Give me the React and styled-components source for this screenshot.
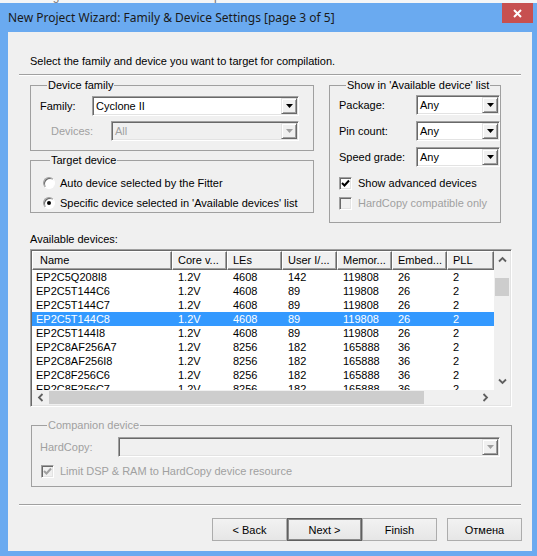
import styled, { createGlobalStyle } from "styled-components";

const GlobalStyle = createGlobalStyle`
  body {
    margin: 0;
    background: #ffffff;
    font-family: "Liberation Sans", Arial, sans-serif;
  }
`;

const Page = styled.div`
  width: 537px;
  height: 556px;
  overflow: hidden;
  display: flex;
  flex-direction: column;
`;

const MenuStrip = styled.div`
  height: 3px;
  overflow: hidden;
  background: #f5f6f7;
  font-size: 12px;
  line-height: 14px;
  color: #777;
  white-space: nowrap;
  & > div {
    margin-top: -11px;
    display: flex;
    gap: 22px;
  }
`;

const Frame = styled.div`
  flex: 1;
  display: flex;
  flex-direction: column;
  background: #6aaaf0;
  padding: 0 5px 5px 8px;
`;

const TitleBar = styled.div`
  height: 29px;
  display: flex;
  justify-content: space-between;
  align-items: flex-start;
`;

const Title = styled.span`
  font-family: "Noto Sans", "Open Sans", sans-serif;
  font-size: 12px;
  line-height: 16px;
  color: #1a1a1a;
  margin-top: 7px;
  white-space: nowrap;
`;

const CloseBtn = styled.div`
  width: 31px;
  height: 20px;
  margin-right: -1px;
  background: #c75050;
  display: flex;
  align-items: center;
  justify-content: center;
`;

const Client = styled.div`
  flex: 1;
  background: #f0f0f0;
  display: flex;
  flex-direction: column;
  font-size: 11px;
  color: #000;
`;

const Intro = styled.div`
  margin: 23px 0 0 22px;
  line-height: 13px;
`;

const Separator = styled.div`
  margin: ${p => p.top}px 11px 0 11px;
  border-top: 1px solid #a0a0a0;
  border-bottom: 1px solid #ffffff;
`;

const Columns = styled.div`
  display: flex;
  gap: 15px;
  margin: 3px 0 0 22px;
`;

const Stack = styled.div`
  display: flex;
  flex-direction: column;
  gap: 3px;
`;

const Group = styled.fieldset`
  margin: 0;
  margin-left: ${p => p.left || 0}px;
  padding: ${p => p.pad || "0 0 0 9px"};
  box-sizing: border-box;
  width: ${p => p.w}px;
  height: ${p => p.h}px;
  border: 1px solid #a0a0a0;
  min-inline-size: 0;
  display: flex;
  flex-direction: column;
`;

const Legend = styled.legend`
  margin-left: 7px;
  padding: 0 1px;
  line-height: 13px;
  color: ${p => (p.disabled ? "#a0a0a0" : "#000")};
`;

const Row = styled.div`
  display: flex;
  align-items: center;
  height: 20px;
  margin-top: ${p => p.top || 0}px;
  padding-left: ${p => p.indent || 0}px;
`;

const Label = styled.span`
  width: ${p => p.w}px;
  flex-shrink: 0;
  color: ${p => (p.disabled ? "#a0a0a0" : "#000")};
`;

const ComboBox = styled.div`
  box-sizing: border-box;
  width: ${p => p.w}px;
  height: 20px;
  display: flex;
  border: 1px solid;
  border-color: #a0a0a0 #ffffff #ffffff #a0a0a0;
  box-shadow: inset 1px 1px 0 #696969, inset -1px -1px 0 #e3e3e3;
  background: ${p => (p.disabled ? "#f0f0f0" : "#ffffff")};
  padding: 1px;
`;

const ComboText = styled.span`
  flex: 1;
  padding-left: 2px;
  line-height: 16px;
  color: ${p => (p.disabled ? "#a0a0a0" : "#000")};
`;

const DropButton = styled.span`
  box-sizing: border-box;
  width: 16px;
  height: 16px;
  background: #f0f0f0;
  border: 1px solid;
  border-color: #e3e3e3 #696969 #696969 #e3e3e3;
  box-shadow: inset 1px 1px 0 #ffffff, inset -1px -1px 0 #a0a0a0;
  display: flex;
  align-items: center;
  justify-content: center;
`;

const Choice = styled.label`
  display: flex;
  align-items: center;
  height: 20px;
  gap: ${p => p.gap || 5}px;
  color: ${p => (p.disabled ? "#a0a0a0" : "#000")};
`;

const RadioDot = styled.span`
  box-sizing: border-box;
  width: 12px;
  height: 12px;
  border-radius: 50%;
  border: 1px solid;
  border-color: #a0a0a0 #ffffff #ffffff #a0a0a0;
  box-shadow: inset 1px 1px 0 #696969;
  background: #ffffff;
  display: flex;
  align-items: center;
  justify-content: center;
  &::after {
    content: "";
    width: 4px;
    height: 4px;
    border-radius: 50%;
    background: ${p => (p.checked ? "#000" : "transparent")};
  }
`;

const CheckBox = styled.span`
  box-sizing: border-box;
  width: 13px;
  height: 13px;
  border: 1px solid;
  border-color: #a0a0a0 #ffffff #ffffff #a0a0a0;
  box-shadow: inset 1px 1px 0 #696969, inset -1px -1px 0 #e3e3e3;
  background: ${p => (p.disabled ? "#f0f0f0" : "#ffffff")};
  display: flex;
  align-items: center;
  justify-content: center;
`;

const Caption = styled.div`
  margin: 10px 0 0 22px;
  line-height: 13px;
`;

const ListBox = styled.div`
  margin: 3px 0 0 22px;
  width: 482px;
  height: 158px;
  box-sizing: border-box;
  border: 1px solid;
  border-color: #a0a0a0 #ffffff #ffffff #a0a0a0;
  box-shadow: inset 1px 1px 0 #696969, inset -1px -1px 0 #e3e3e3;
  padding: 1px;
  display: grid;
  grid-template-columns: 462px 16px;
  grid-template-rows: 139px 15px;
  background: #ffffff;
`;

const ListMain = styled.div`
  overflow: hidden;
  display: flex;
  flex-direction: column;
`;

const cols = "140px 55px 55px 55px 55px 55px 47px";

const HeaderRow = styled.div`
  display: grid;
  grid-template-columns: ${cols};
  height: 19px;
  flex-shrink: 0;
`;

const HeaderCell = styled.div`
  box-sizing: border-box;
  background: #f0f0f0;
  border: 1px solid;
  border-color: #ffffff #696969 #696969 #ffffff;
  box-shadow: inset -1px -1px 0 #a0a0a0;
  padding-left: ${p => p.pad}px;
  line-height: 16px;
  white-space: nowrap;
  overflow: hidden;
`;

const Body = styled.div`
  height: 120px;
  overflow: hidden;
`;

const DataRow = styled.div`
  display: grid;
  grid-template-columns: ${cols};
  height: 14px;
  line-height: 14px;
  background: ${p => (p.selected ? "#3399ff" : "transparent")};
  color: ${p => (p.selected ? "#ffffff" : "#000")};
`;

const Cell = styled.span`
  padding-left: ${p => p.pad}px;
  white-space: nowrap;
  overflow: hidden;
`;

const VScroll = styled.div`
  background: #f0f0f0;
  display: flex;
  flex-direction: column;
`;

const HScroll = styled.div`
  background: #f0f0f0;
  display: flex;
`;

const ArrowBtn = styled.div`
  width: ${p => (p.horizontal ? "17px" : "100%")};
  height: ${p => (p.horizontal ? "100%" : "17px")};
  flex-shrink: 0;
  display: flex;
  align-items: center;
  justify-content: center;
`;

const Track = styled.div`
  flex: 1;
  display: flex;
  flex-direction: ${p => (p.horizontal ? "row" : "column")};
`;

const Thumb = styled.div`
  background: #cdcdcd;
  margin: ${p => p.margin};
  width: ${p => p.w};
  height: ${p => p.h};
`;

const Corner = styled.div`
  background: #f0f0f0;
`;

const ButtonBar = styled.div`
  display: flex;
  justify-content: flex-end;
  margin: 12px 10px 0 0;
`;

const Button = styled.button`
  box-sizing: border-box;
  width: 75px;
  height: 23px;
  margin-left: ${p => p.gap || 0}px;
  font-family: "Liberation Sans", Arial, sans-serif;
  font-size: 11px;
  color: #000;
  background: linear-gradient(#f2f2f2, #e6e6e6);
  border: 1px solid ${p => (p.primary ? "#5f5f5f" : "#acacac")};
  box-shadow: ${p => (p.primary ? "inset 0 0 0 1px #8a8a8a" : "none")};
  padding: 0;
`;

const Arrow = ({ color = "#000" }) => (
  <svg width="7" height="4" viewBox="0 0 7 4">
    <path d="M0 0 H7 L3.5 4 Z" fill={color} />
  </svg>
);

const Combo = ({ w, value, disabled }) => (
  <ComboBox w={w} disabled={disabled}>
    <ComboText disabled={disabled}>{value}</ComboText>
    <DropButton>
      <Arrow color={disabled ? "#a0a0a0" : "#000"} />
    </DropButton>
  </ComboBox>
);

const Check = ({ color }) => (
  <svg width="9" height="9" viewBox="0 0 9 9">
    <path d="M1 4 L3.5 6.5 L8 1.5" stroke={color} strokeWidth="2" fill="none" />
  </svg>
);

const Chevron = ({ dir }) => {
  const rot = { up: 0, right: 90, down: 180, left: 270 }[dir];
  return (
    <svg width="9" height="9" viewBox="0 0 9 9" style={{ transform: `rotate(${rot}deg)` }}>
      <path d="M1 6.5 L4.5 3 L8 6.5" stroke="#606060" strokeWidth="1.8" fill="none" />
    </svg>
  );
};

const headers = [
  ["Name", 7],
  ["Core v...", 5],
  ["LEs", 5],
  ["User I/...", 5],
  ["Memor...", 5],
  ["Embed...", 5],
  ["PLL", 5],
];

const devices = [
  ["EP2C5Q208I8", "1.2V", "4608", "142", "119808", "26", "2"],
  ["EP2C5T144C6", "1.2V", "4608", "89", "119808", "26", "2"],
  ["EP2C5T144C7", "1.2V", "4608", "89", "119808", "26", "2"],
  ["EP2C5T144C8", "1.2V", "4608", "89", "119808", "26", "2"],
  ["EP2C5T144I8", "1.2V", "4608", "89", "119808", "26", "2"],
  ["EP2C8AF256A7", "1.2V", "8256", "182", "165888", "36", "2"],
  ["EP2C8AF256I8", "1.2V", "8256", "182", "165888", "36", "2"],
  ["EP2C8F256C6", "1.2V", "8256", "182", "165888", "36", "2"],
  ["EP2C8F256C7", "1.2V", "8256", "182", "165888", "36", "2"],
];

export default function App() {
  return (
    <Page>
      <GlobalStyle />
      <MenuStrip>
        <div>
          <span>Processing</span>
          <span>Tools</span>
          <span>Window</span>
          <span>Help</span>
        </div>
      </MenuStrip>
      <Frame>
        <TitleBar>
          <Title>New Project Wizard: Family &amp; Device Settings [page 3 of 5]</Title>
          <CloseBtn>
            <svg width="9" height="9" viewBox="0 0 9 9">
              <path d="M1 1 L8 8 M8 1 L1 8" stroke="#fff" strokeWidth="2" />
            </svg>
          </CloseBtn>
        </TitleBar>
        <Client>
          <Intro>Select the family and device you want to target for compilation.</Intro>
          <Separator top={6} />
          <Columns>
            <Stack>
              <Group w={284} h={72}>
                <Legend>Device family</Legend>
                <Row top={4}>
                  <Label w={52}>Family:</Label>
                  <Combo w={207} value="Cyclone II" />
                </Row>
                <Row top={5} indent={11}>
                  <Label w={60} disabled>Devices:</Label>
                  <Combo w={188} value="All" disabled />
                </Row>
              </Group>
              <Group w={284} h={59} pad="0 0 0 12px">
                <Legend>Target device</Legend>
                <Choice style={{ marginTop: 6 }}>
                  <RadioDot />
                  Auto device selected by the Fitter
                </Choice>
                <Choice>
                  <RadioDot checked />
                  Specific device selected in 'Available devices' list
                </Choice>
              </Group>
            </Stack>
            <Group w={172} h={144}>
              <Legend>Show in 'Available device' list</Legend>
              <Row top={3}>
                <Label w={77}>Package:</Label>
                <Combo w={84} value="Any" />
              </Row>
              <Row top={6}>
                <Label w={77}>Pin count:</Label>
                <Combo w={84} value="Any" />
              </Row>
              <Row top={6}>
                <Label w={77}>Speed grade:</Label>
                <Combo w={84} value="Any" />
              </Row>
              <Choice style={{ marginTop: 6 }} gap={6}>
                <CheckBox>
                  <Check color="#000" />
                </CheckBox>
                Show advanced devices
              </Choice>
              <Choice disabled gap={6}>
                <CheckBox disabled />
                HardCopy compatible only
              </Choice>
            </Group>
          </Columns>
          <Caption>Available devices:</Caption>
          <ListBox>
            <ListMain>
              <HeaderRow>
                {headers.map(([h, pad]) => (
                  <HeaderCell key={h} pad={pad}>{h}</HeaderCell>
                ))}
              </HeaderRow>
              <Body>
                {devices.map((d, i) => (
                  <DataRow key={d[0]} selected={i === 3}>
                    {d.map((v, j) => (
                      <Cell key={j} pad={j === 0 ? 4 : 6}>{v}</Cell>
                    ))}
                  </DataRow>
                ))}
              </Body>
            </ListMain>
            <VScroll>
              <ArrowBtn><Chevron dir="up" /></ArrowBtn>
              <Track>
                <Thumb margin="10px 1px 0 1px" w="14px" h="18px" />
              </Track>
              <ArrowBtn><Chevron dir="down" /></ArrowBtn>
            </VScroll>
            <HScroll>
              <ArrowBtn horizontal><Chevron dir="left" /></ArrowBtn>
              <Track horizontal>
                <Thumb margin="1px 0" w="375px" h="13px" />
              </Track>
              <ArrowBtn horizontal><Chevron dir="right" /></ArrowBtn>
            </HScroll>
            <Corner />
          </ListBox>
          <Group w={481} h={68} left={23} pad="0 0 0 8px" style={{ marginTop: 12 }}>
            <Legend disabled>Companion device</Legend>
            <Row top={5}>
              <Label w={78} disabled>HardCopy:</Label>
              <Combo w={382} value="" disabled />
            </Row>
            <Choice disabled gap={6} style={{ marginTop: 4, paddingLeft: 1 }}>
              <CheckBox disabled>
                <Check color="#a0a0a0" />
              </CheckBox>
              Limit DSP &amp; RAM to HardCopy device resource
            </Choice>
          </Group>
          <Separator top={17} />
          <ButtonBar>
            <Button>&lt; Back</Button>
            <Button primary>Next &gt;</Button>
            <Button>Finish</Button>
            <Button gap={10}>Отмена</Button>
          </ButtonBar>
        </Client>
      </Frame>
    </Page>
  );
}
